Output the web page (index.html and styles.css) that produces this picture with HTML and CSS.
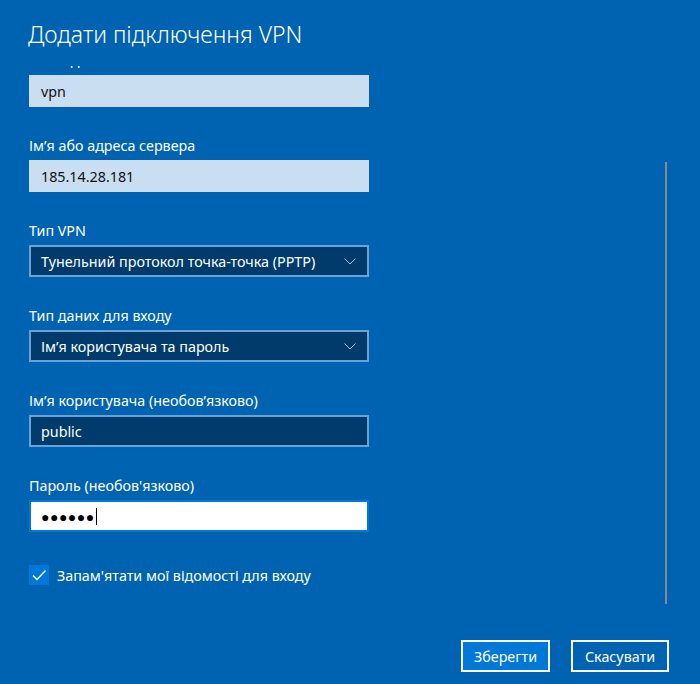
FILE: index.html
```html
<!DOCTYPE html>
<html lang="uk">
<head>
<meta charset="utf-8">
<title>Додати підключення VPN</title>
<link rel="stylesheet" href="styles.css">
</head>
<body>
<div class="dialog">
  <header class="header">
    <h1 class="title">Додати підключення VPN</h1>
  </header>
  <div class="scroller">
    <div class="content">
      <div class="field">
        <div class="label">Ім’я підключення</div>
        <div class="input light">vpn</div>
      </div>
      <div class="field">
        <div class="label">Ім’я або адреса сервера</div>
        <div class="input light">185.14.28.181</div>
      </div>
      <div class="field">
        <div class="label">Тип VPN</div>
        <div class="input dark select">
          <span>Тунельний протокол точка-точка (PPTP)</span>
          <svg class="chev" width="12" height="7" viewBox="0 0 12 7"><polyline points="0.5,0.5 6,6 11.5,0.5" fill="none" stroke="#9fbddb" stroke-width="1"/></svg>
        </div>
      </div>
      <div class="field">
        <div class="label">Тип даних для входу</div>
        <div class="input dark select">
          <span>Ім’я користувача та пароль</span>
          <svg class="chev" width="12" height="7" viewBox="0 0 12 7"><polyline points="0.5,0.5 6,6 11.5,0.5" fill="none" stroke="#9fbddb" stroke-width="1"/></svg>
        </div>
      </div>
      <div class="field">
        <div class="label">Ім’я користувача (необов’язково)</div>
        <div class="input dark">public</div>
      </div>
      <div class="field">
        <div class="label">Пароль (необов'язково)</div>
        <div class="input focus"><span class="dots">●●●●●●</span><span class="caret"></span></div>
      </div>
      <div class="check">
        <span class="box"><svg width="20" height="20" viewBox="0 0 20 20"><polyline points="4,10.5 8,14.5 16.5,5.5" fill="none" stroke="#fff" stroke-width="1.4"/></svg></span>
        <span class="check-label">Запам'ятати мої відомості для входу</span>
      </div>
    </div>
    <div class="scrollbar"></div>
  </div>
  <footer class="footer">
    <button class="btn primary">Зберегти</button>
    <button class="btn">Скасувати</button>
  </footer>
</div>
</body>
</html>
```
FILE: styles.css
```css
html, body {
  margin: 0;
  padding: 0;
}
body {
  width: 700px;
  height: 684px;
  overflow: hidden;
  background: #0063b1;
  font-family: "Noto Sans", "Open Sans", sans-serif;
  color: #fff;
}
.dialog {
  display: flex;
  flex-direction: column;
  height: 684px;
}
.header {
  height: 66px;
  padding-left: 28px;
  box-sizing: border-box;
}
.title {
  margin: 0;
  padding-top: 18px;
  font-size: 23px;
  font-weight: 300;
  line-height: 32px;
}
.scroller {
  position: relative;
  height: 559px;
  overflow: hidden;
}
.content {
  margin-top: -18px;
  padding-left: 29px;
}
.field {
  margin-bottom: 26px;
  width: 340px;
}
.label {
  font-size: 14.3px;
  line-height: 20px;
  height: 20px;
  padding-top: 3px;
  margin-bottom: 4px;
}
.input {
  box-sizing: border-box;
  height: 32px;
  width: 340px;
  display: flex;
  align-items: center;
  padding-left: 12px;
  font-size: 14.3px;
}
.light {
  background: #c9def0;
  color: #111;
}
.dark {
  background: #003b6b;
  border: 2px solid #69a2d6;
  padding-left: 10px;
  color: #fff;
}
.select {
  justify-content: space-between;
  padding-right: 11px;
}
.chev {
  display: block;
}
.focus {
  background: #fff;
  border: 2px solid #0078d7;
  padding-left: 10px;
  color: #000;
}
.dots {
  font-size: 14px;
  letter-spacing: 0.5px;
}
.caret {
  display: inline-block;
  width: 1px;
  height: 17px;
  background: #000;
  margin-left: 1px;
}
.check {
  display: flex;
  align-items: center;
  margin-top: 33px;
}
.box {
  width: 20px;
  height: 20px;
  background: #0078d7;
  display: block;
}
.box svg {
  display: block;
}
.check-label {
  margin-left: 8px;
  font-size: 14.3px;
}
.scrollbar {
  position: absolute;
  left: 665px;
  top: 96px;
  width: 2px;
  height: 442px;
  background: #8a8a8a;
}
.footer {
  display: flex;
  justify-content: flex-end;
  gap: 21px;
  padding-top: 15px;
  padding-right: 31px;
}
.btn {
  box-sizing: border-box;
  height: 32px;
  border: 2px solid #fff;
  background: #0063b1;
  color: #fff;
  font-family: "Noto Sans", "Open Sans", sans-serif;
  font-size: 14.3px;
  padding: 0;
  width: 98px;
}
.btn.primary {
  background: #0078d7;
  width: 89px;
}
```
